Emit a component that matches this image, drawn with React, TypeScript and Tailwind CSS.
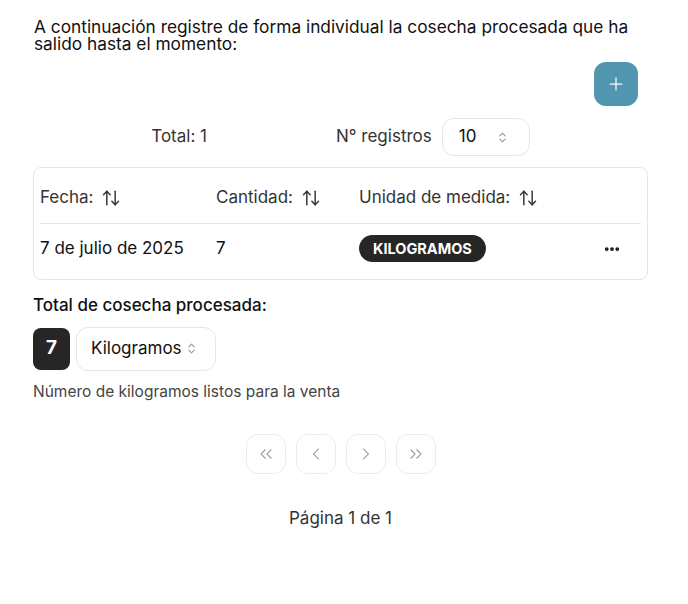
import { ArrowUpDown, ChevronsUpDown, ChevronLeft, ChevronRight, ChevronsLeft, ChevronsRight, Ellipsis, Plus } from "lucide-react"

const COLUMNS = ["Fecha:", "Cantidad:", "Unidad de medida:"]

function PageButton({ children }: { children: React.ReactNode }) {
  return (
    <button className="flex h-10 w-10 items-center justify-center rounded-xl border border-[#ececec] bg-white text-[#888]">
      {children}
    </button>
  )
}

export default function App() {
  return (
    <div className="min-h-screen bg-white font-['Inter',sans-serif] text-[#111]">
      <div className="ml-[33px] w-[615px] pt-[18px]">
        <p className="pl-px text-[17.3px] leading-[17px] text-[#111]">
          A continuación registre de forma individual la cosecha procesada que ha salido hasta el momento:
        </p>

        <div className="mt-[10px] flex justify-end pr-[10px]">
          <button className="flex h-11 w-11 items-center justify-center rounded-xl bg-[#5096af] text-white">
            <Plus size={20} strokeWidth={1.5} />
          </button>
        </div>

        <div className="mt-3 flex items-center justify-center gap-[129px] text-[17px]">
          <span className="text-[#333]">Total: 1</span>
          <div className="flex items-center gap-[10px]">
            <span className="text-[#333]">N° registros</span>
            <div className="flex h-[38px] w-[88px] items-center justify-between rounded-xl border border-[#e6e6e6] pl-4 pr-5">
              <span className="text-[#111]">10</span>
              <ChevronsUpDown size={13} className="text-[#999]" />
            </div>
          </div>
        </div>

        <div className="mt-[11px] rounded-lg border border-[#e5e5e5] px-[6px]">
          <div className="flex h-[56px] items-center border-b border-[#e5e5e5] pt-[4px] text-[17px] text-[#333]">
            {COLUMNS.map((c, i) => (
              <div key={c} className={`flex items-center gap-[8px] ${i === 0 ? "w-[176px]" : i === 1 ? "w-[143px]" : ""}`}>
                <span>{c}</span>
                <ArrowUpDown size={20} strokeWidth={1.75} className="text-[#333]" />
              </div>
            ))}
          </div>
          <div className="flex h-[55px] items-center pb-[6px] text-[17px] text-[#111]">
            <span className="w-[176px]">7 de julio de 2025</span>
            <span className="w-[143px]">7</span>
            <span className="rounded-full bg-[#262626] px-[14px] py-[5px] text-[14.5px] font-bold leading-[17px] text-white">
              KILOGRAMOS
            </span>
            <Ellipsis size={18} strokeWidth={3} className="ml-auto mr-[20px] text-[#111]" />
          </div>
        </div>

        <p className="mt-[13px] text-[17px] font-medium text-[#111]">Total de cosecha procesada:</p>

        <div className="mt-[8px] flex items-center gap-[6px]">
          <div className="flex h-[42px] w-[37px] items-center justify-center rounded-lg bg-[#262626] text-[19px] font-bold text-white">
            7
          </div>
          <div className="flex h-[44px] w-[140px] items-center gap-[3px] rounded-xl border border-[#e6e6e6] pl-[14px]">
            <span className="text-[17px] text-[#111]">Kilogramos</span>
            <ChevronsUpDown size={13} className="text-[#999]" />
          </div>
        </div>

        <p className="mt-[9px] text-[15.5px] text-[#444]">Número de kilogramos listos para la venta</p>

        <div className="mt-[31px] flex justify-center gap-[10px]">
          <PageButton><ChevronsLeft size={20} strokeWidth={1.25} /></PageButton>
          <PageButton><ChevronLeft size={20} strokeWidth={1.25} /></PageButton>
          <PageButton><ChevronRight size={20} strokeWidth={1.25} /></PageButton>
          <PageButton><ChevronsRight size={20} strokeWidth={1.25} /></PageButton>
        </div>

        <p className="mt-[32px] text-center text-[17px] text-[#333]">Página 1 de 1</p>
      </div>
    </div>
  )
}
